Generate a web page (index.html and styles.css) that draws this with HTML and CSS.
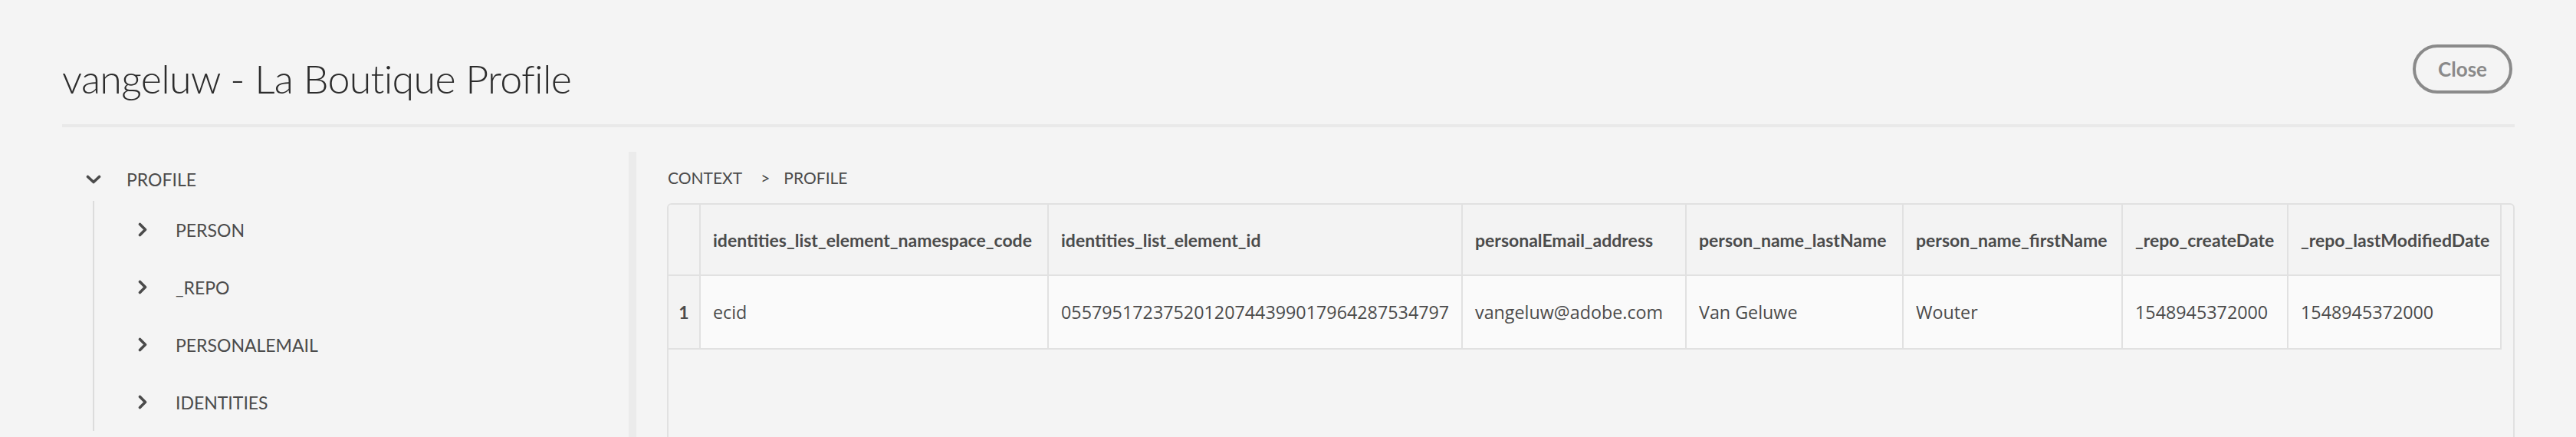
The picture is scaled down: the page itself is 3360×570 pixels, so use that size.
FILE: index.html
```html
<!DOCTYPE html>
<html lang="en">
<head>
<meta charset="utf-8">
<title>vangeluw - La Boutique Profile</title>
<link rel="stylesheet" href="styles.css">
</head>
<body>
<div class="dialog">
  <header class="dialog-header">
    <h1 class="dialog-title">vangeluw - La Boutique Profile</h1>
    <button class="btn-close" type="button">Close</button>
  </header>
  <div class="dialog-body">
    <nav class="tree-panel">
      <div class="tree-root">
        <svg class="chev-down" width="20" height="12" viewBox="0 0 20 12"><polyline points="2.5,2.5 10,9.5 17.5,2.5" fill="none" stroke="#4b4b4b" stroke-width="3.6" stroke-linecap="round" stroke-linejoin="round"/></svg>
        <span class="tree-label">PROFILE</span>
      </div>
      <div class="tree-children">
        <div class="tree-item">
          <svg class="chev-right" width="12" height="19" viewBox="0 0 12 19"><polyline points="2.5,2.5 9.5,9.5 2.5,16.5" fill="none" stroke="#4b4b4b" stroke-width="3.6" stroke-linecap="round" stroke-linejoin="round"/></svg>
          <span class="tree-label">PERSON</span>
        </div>
        <div class="tree-item">
          <svg class="chev-right" width="12" height="19" viewBox="0 0 12 19"><polyline points="2.5,2.5 9.5,9.5 2.5,16.5" fill="none" stroke="#4b4b4b" stroke-width="3.6" stroke-linecap="round" stroke-linejoin="round"/></svg>
          <span class="tree-label">_REPO</span>
        </div>
        <div class="tree-item">
          <svg class="chev-right" width="12" height="19" viewBox="0 0 12 19"><polyline points="2.5,2.5 9.5,9.5 2.5,16.5" fill="none" stroke="#4b4b4b" stroke-width="3.6" stroke-linecap="round" stroke-linejoin="round"/></svg>
          <span class="tree-label">PERSONALEMAIL</span>
        </div>
        <div class="tree-item">
          <svg class="chev-right" width="12" height="19" viewBox="0 0 12 19"><polyline points="2.5,2.5 9.5,9.5 2.5,16.5" fill="none" stroke="#4b4b4b" stroke-width="3.6" stroke-linecap="round" stroke-linejoin="round"/></svg>
          <span class="tree-label">IDENTITIES</span>
        </div>
      </div>
    </nav>
    <section class="content">
      <div class="breadcrumb">
        <span>CONTEXT</span><span class="crumb-sep">&gt;</span><span>PROFILE</span>
      </div>
      <div class="grid-box">
        <table class="grid">
          <colgroup>
            <col class="c-num"><col class="c-1"><col class="c-2"><col class="c-3"><col class="c-4"><col class="c-5"><col class="c-6"><col class="c-7">
          </colgroup>
          <thead>
            <tr>
              <th class="num"></th>
              <th>identities_list_element_namespace_code</th>
              <th>identities_list_element_id</th>
              <th>personalEmail_address</th>
              <th>person_name_lastName</th>
              <th>person_name_firstName</th>
              <th>_repo_createDate</th>
              <th>_repo_lastModifiedDate</th>
            </tr>
          </thead>
          <tbody>
            <tr>
              <td class="num">1</td>
              <td>ecid</td>
              <td>05579517237520120744399017964287534797</td>
              <td>vangeluw@adobe.com</td>
              <td>Van Geluwe</td>
              <td>Wouter</td>
              <td>1548945372000</td>
              <td>1548945372000</td>
            </tr>
          </tbody>
        </table>
      </div>
    </section>
  </div>
</div>
</body>
</html>
```
FILE: styles.css
```css
* { box-sizing: border-box; }
html, body {
  margin: 0;
  padding: 0;
  background: #f4f4f4;
  font-family: Lato, "Open Sans", sans-serif;
  color: #4b4b4b;
  overflow: hidden;
}
.dialog {
  padding: 0 80px 0 81px;
}
.dialog-header {
  display: flex;
  justify-content: space-between;
  align-items: flex-start;
  padding-top: 58px;
  padding-bottom: 28px;
  border-bottom: 4px solid #e9e9e9;
}
.dialog-title {
  margin: 12px 0 0 0;
  font-size: 52px;
  line-height: 64px;
  font-weight: 300;
  letter-spacing: -0.7px;
  color: #2c2c2c;
}
.btn-close {
  width: 130px;
  height: 64px;
  margin-right: 3px;
  border: 4px solid #8a8a8a;
  border-radius: 32px;
  background: transparent;
  color: #8a8a8a;
  font-family: Lato, "Open Sans", sans-serif;
  font-weight: 700;
  font-size: 26px;
  padding: 0;
}
.dialog-body {
  display: flex;
  margin-top: 32px;
}
.tree-panel {
  width: 749px;
  flex: 0 0 749px;
  min-height: 420px;
  border-right: 10px solid #ebebeb;
}
.tree-root {
  height: 71px;
  display: flex;
  align-items: center;
  padding-left: 31px;
}
.chev-down { margin-right: 33px; flex: none; }
.tree-label {
  font-size: 23px;
  color: #4b4b4b;
}
.tree-children {
  margin: 5px 0 0 40px;
  border-left: 2px solid #dcdcdc;
}
.tree-item {
  height: 75px;
  display: flex;
  align-items: center;
  padding-left: 57px;
}
.tree-item:first-child { margin-top: -12px; }
.tree-item:last-child { margin-bottom: -5px; }
.chev-right { margin-right: 37px; flex: none; }
.content {
  flex: 1;
  padding-left: 40px;
  min-width: 0;
}
.breadcrumb {
  margin-top: 20px;
  padding-left: 1px;
  font-size: 21px;
  line-height: 28px;
  color: #4b4b4b;
  display: flex;
}
.crumb-sep {
  margin: 0 18px 0 24px;
}
.grid-box {
  margin-top: 19px;
  border: 2px solid #e1e1e1;
  border-radius: 6px;
  height: 420px;
  overflow: hidden;
}
.grid {
  border-collapse: separate;
  border-spacing: 0;
  table-layout: fixed;
  width: 2391px;
}
.c-num { width: 42px; }
.c-1 { width: 454px; }
.c-2 { width: 540px; }
.c-3 { width: 292px; }
.c-4 { width: 283px; }
.c-5 { width: 286px; }
.c-6 { width: 216px; }
.c-7 { width: 278px; }
.grid th, .grid td {
  border-right: 2px solid #e1e1e1;
  border-bottom: 2px solid #e1e1e1;
  padding: 0 16px;
  white-space: nowrap;
  overflow: hidden;
  text-align: left;
  color: #4b4b4b;
}
.grid th {
  height: 93px;
  background: #f3f3f3;
  font-size: 23px;
  font-weight: 700;
}
.grid td {
  height: 96px;
  background: #fafafa;
  font-family: "Open Sans", Lato, sans-serif;
  font-size: 23.3px;
  font-weight: 400;
}
.grid .num {
  padding: 0;
  text-align: center;
  background: #f3f3f3;
  font-family: Lato, "Open Sans", sans-serif;
  font-weight: 700;
  font-size: 23px;
}
```
